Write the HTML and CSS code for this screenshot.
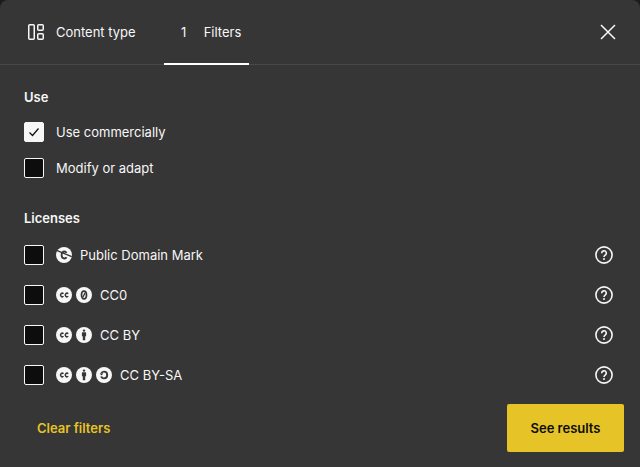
FILE: index.html
```html
<!DOCTYPE html>
<html lang="en">
<head>
<meta charset="utf-8">
<meta name="viewport" content="width=device-width, initial-scale=1">
<title>Filters</title>
<link rel="stylesheet" href="styles.css">
</head>
<body>
<svg class="sprite" aria-hidden="true">
  <symbol id="help" viewBox="0 0 18 18">
    <g fill="none" stroke="currentColor" stroke-width="1.600">
      <circle cx="9" cy="9" r="8.100"/>
      <path d="M6.700 7.200a2.300 2.300 0 1 1 3.500 1.900C9.300 9.700 9 10 9 10.900"/>
    </g>
    <circle cx="9" cy="12.900" r="1" fill="currentColor"/>
  </symbol>
  <symbol id="cc" viewBox="0 0 16 16">
    <circle cx="8" cy="8" r="8" fill="#f7f7f7"/>
    <g fill="none" stroke="#363636" stroke-width="1.500">
      <path d="M7.500 6.700a1.750 1.750 0 1 0 0 2.600"/>
      <path d="M12.200 6.700a1.750 1.750 0 1 0 0 2.600"/>
    </g>
  </symbol>
  <symbol id="zero" viewBox="0 0 16 16">
    <circle cx="8" cy="8" r="8" fill="#f7f7f7"/>
    <ellipse cx="8" cy="8" rx="2.500" ry="3.900" fill="none" stroke="#363636" stroke-width="1.700"/>
    <path d="M9.200 5.700 6.800 10.300" stroke="#363636" stroke-width="1.400"/>
  </symbol>
  <symbol id="by" viewBox="0 0 16 16">
    <circle cx="8" cy="8" r="8" fill="#f7f7f7"/>
    <circle cx="8" cy="3.600" r="1.200" fill="#363636"/>
    <path d="M6.400 5.300h3.200q.5 0 .5.500v3.400H9.200v4H6.800v-4H5.900V5.800q0-.5.500-.5z" fill="#363636"/>
  </symbol>
  <symbol id="sa" viewBox="0 0 16 16">
    <circle cx="8" cy="8" r="8" fill="#f7f7f7"/>
    <path d="M5.300 6.600C5.700 5.200 6.700 4.600 8 4.600c2 0 3.200 1.400 3.200 3.400S10 11.400 8 11.400c-1.400 0-2.400-.7-2.700-2" fill="none" stroke="#363636" stroke-width="1.900"/>
    <path d="M3.700 6.600h3.600L5.500 8.400z" fill="#363636"/>
  </symbol>
  <symbol id="pdm" viewBox="0 0 16 16">
    <circle cx="8" cy="8" r="8" fill="#f7f7f7"/>
    <path d="M10.600 5.700C10 4.900 9.200 4.500 8.400 4.500 6.600 4.500 5.600 6 5.600 8s1 3.500 2.800 3.500c.9 0 1.700-.4 2.200-1.200" fill="none" stroke="#363636" stroke-width="1.800"/>
    <path d="M.6 3.300 15.700 9.600" stroke="#363636" stroke-width="1.400"/>
  </symbol>
</svg>
<main class="modal">
  <header class="header">
    <nav class="tabs" role="tablist">
      <button class="tab" type="button" role="tab" aria-selected="false">
        <svg class="icon" viewBox="0 0 24 24" fill="none" stroke="currentColor" stroke-width="1.500" aria-hidden="true">
          <rect x="4.750" y="4.750" width="5.500" height="14.500" rx="1"/>
          <rect x="13.750" y="4.750" width="5.500" height="5.500" rx="1"/>
          <rect x="13.750" y="13.750" width="5.500" height="5.500" rx="1"/>
        </svg>
        Content type
      </button>
      <button class="tab selected" type="button" role="tab" aria-selected="true"><span class="count">1</span>Filters</button>
    </nav>
    <button class="close" type="button" aria-label="Close">
      <svg class="icon" viewBox="0 0 24 24" fill="none" stroke="currentColor" stroke-width="1.500" aria-hidden="true"><path d="M5 5l14 14M19 5 5 19"/></svg>
    </button>
  </header>
  <form class="filters">
    <fieldset class="group uses">
      <legend>Use</legend>
      <label class="option"><input type="checkbox" checked><svg class="tick" viewBox="0 0 20 20" aria-hidden="true"><path d="m5.500 10.500 3 3 6-7"/></svg>Use commercially</label>
      <label class="option"><input type="checkbox">Modify or adapt</label>
    </fieldset>
    <fieldset class="group licenses">
      <legend>Licenses</legend>
      <div class="row">
        <label class="option"><input type="checkbox"><span class="license"><svg class="badge"><use href="#pdm"/></svg><span class="name">Public Domain Mark</span></span></label>
        <button class="help" type="button" aria-label="About Public Domain Mark"><svg><use href="#help"/></svg></button>
      </div>
      <div class="row">
        <label class="option"><input type="checkbox"><span class="license"><svg class="badge"><use href="#cc"/></svg><svg class="badge"><use href="#zero"/></svg><span class="name">CC0</span></span></label>
        <button class="help" type="button" aria-label="About CC0"><svg><use href="#help"/></svg></button>
      </div>
      <div class="row">
        <label class="option"><input type="checkbox"><span class="license"><svg class="badge"><use href="#cc"/></svg><svg class="badge"><use href="#by"/></svg><span class="name">CC BY</span></span></label>
        <button class="help" type="button" aria-label="About CC BY"><svg><use href="#help"/></svg></button>
      </div>
      <div class="row">
        <label class="option"><input type="checkbox"><span class="license"><svg class="badge"><use href="#cc"/></svg><svg class="badge"><use href="#by"/></svg><svg class="badge"><use href="#sa"/></svg><span class="name">CC BY-SA</span></span></label>
        <button class="help" type="button" aria-label="About CC BY-SA"><svg><use href="#help"/></svg></button>
      </div>
    </fieldset>
  </form>
  <footer class="footer">
    <button class="action clear" type="button">Clear filters</button>
    <button class="action results" type="button">See results</button>
  </footer>
</main>
</body>
</html>
```

FILE: styles.css
```css
* {
  box-sizing: border-box;
}

body {
  margin: 0;
  background: #1b1b1b;
  color: #f7f7f7;
  font: 13px/20px Inter, sans-serif;
}

button {
  margin: 0;
  padding: 0;
  border: 0;
  background: none;
  color: inherit;
  font: inherit;
  cursor: pointer;
}

svg {
  display: block;
}

.sprite {
  display: none;
}

.modal {
  display: flex;
  flex-direction: column;
  min-height: 100vh;
  background: #363636;
  border-radius: 8px 8px 0 0;
}

.header {
  display: flex;
  justify-content: space-between;
  padding: 0 16px;
  box-shadow: inset 0 -1px #484848;
}

.tabs {
  display: flex;
  gap: 20px;
}

.tab {
  display: flex;
  align-items: center;
  gap: 8px;
  height: 65px;
  padding: 0 8px 1px;
}

.selected {
  box-shadow: inset 0 -2px #fff;
}

.count {
  width: 24px;
  text-align: center;
}

.icon {
  width: 24px;
  height: 24px;
}

.close {
  display: flex;
  align-items: center;
  justify-content: center;
  width: 32px;
  padding-bottom: 1px;
}

.filters {
  padding: 22px 24px 0;
}

.group {
  min-width: 0;
  margin: 0;
  padding: 0;
  border: 0;
}

.group legend {
  padding: 0;
  font-weight: 600;
}

.uses .option {
  margin-top: 16px;
}

.uses legend + .option {
  margin-top: 15px;
}

.licenses {
  margin-top: 30px;
}

.licenses legend {
  margin-bottom: 7px;
}

.row {
  display: flex;
  align-items: center;
  justify-content: space-between;
  height: 40px;
}

.option {
  position: relative;
  display: flex;
  align-items: center;
  gap: 12px;
}

.option input {
  appearance: none;
  width: 20px;
  height: 20px;
  margin: 0;
  border: 1px solid #f7f7f7;
  border-radius: 2px;
  background: #0d0d0d;
}

.option input:checked {
  background: #f7f7f7;
}

.tick {
  position: absolute;
  left: 0;
  top: 0;
  width: 20px;
  height: 20px;
  fill: none;
  stroke: #0d0d0d;
  stroke-width: 1.2;
}

.license {
  display: flex;
  align-items: center;
  gap: 4px;
}

.name {
  margin-left: 4px;
}

.badge {
  width: 16px;
  height: 16px;
}

.help {
  display: flex;
  align-items: center;
  justify-content: center;
  width: 24px;
  height: 24px;
}

.help svg {
  width: 18px;
  height: 18px;
}

.footer {
  display: flex;
  justify-content: space-between;
  margin-top: auto;
  padding: 8px 16px 15px;
}

.action {
  height: 48px;
  padding: 0 21px;
  border-radius: 2px;
  font-weight: 600;
}

.clear {
  color: #e6c427;
}

.results {
  min-width: 117px;
  background: #e6c427;
  color: #0d0d0d;
}
```
